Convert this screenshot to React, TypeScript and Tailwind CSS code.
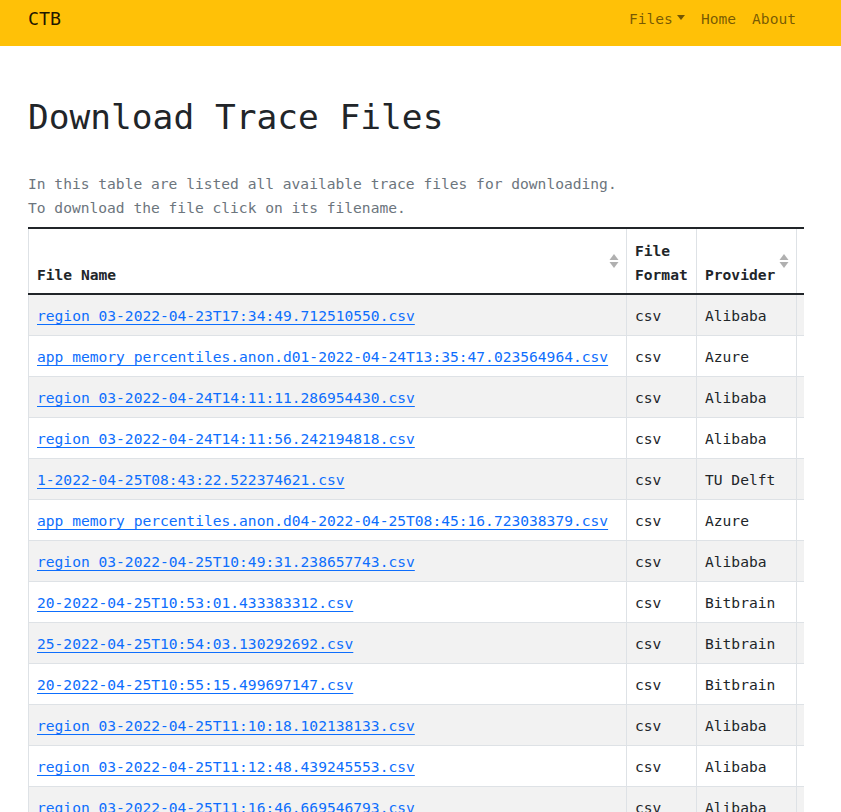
import { useState } from "react";

const MONO = "font-['DejaVu_Sans_Mono','Liberation_Mono',monospace]";

type TraceFile = {
  name: string;
  format: string;
  provider: string;
};

const TRACE_FILES: TraceFile[] = [
  { name: "region_03-2022-04-23T17:34:49.712510550.csv", format: "csv", provider: "Alibaba" },
  { name: "app_memory_percentiles.anon.d01-2022-04-24T13:35:47.023564964.csv", format: "csv", provider: "Azure" },
  { name: "region_03-2022-04-24T14:11:11.286954430.csv", format: "csv", provider: "Alibaba" },
  { name: "region_03-2022-04-24T14:11:56.242194818.csv", format: "csv", provider: "Alibaba" },
  { name: "1-2022-04-25T08:43:22.522374621.csv", format: "csv", provider: "TU Delft" },
  { name: "app_memory_percentiles.anon.d04-2022-04-25T08:45:16.723038379.csv", format: "csv", provider: "Azure" },
  { name: "region_03-2022-04-25T10:49:31.238657743.csv", format: "csv", provider: "Alibaba" },
  { name: "20-2022-04-25T10:53:01.433383312.csv", format: "csv", provider: "Bitbrain" },
  { name: "25-2022-04-25T10:54:03.130292692.csv", format: "csv", provider: "Bitbrain" },
  { name: "20-2022-04-25T10:55:15.499697147.csv", format: "csv", provider: "Bitbrain" },
  { name: "region_03-2022-04-25T11:10:18.102138133.csv", format: "csv", provider: "Alibaba" },
  { name: "region_03-2022-04-25T11:12:48.439245553.csv", format: "csv", provider: "Alibaba" },
  { name: "region_03-2022-04-25T11:16:46.669546793.csv", format: "csv", provider: "Alibaba" },
  { name: "region_03-2022-04-25T11:20:02.118430771.csv", format: "csv", provider: "Alibaba" },
];

const COLUMNS = [
  { key: "name", label: "File Name", sortable: true },
  { key: "format", label: "File Format", sortable: false },
  { key: "provider", label: "Provider", sortable: true },
  { key: "size", label: "Size", sortable: true },
];

function SortIcon() {
  return (
    <svg aria-hidden="true" className="h-[16px] w-[10px]" viewBox="0 0 10 16">
      <path d="M5 1 L9.5 7 L0.5 7 Z" fill="#b0b0b0" />
      <path d="M5 15 L9.5 9 L0.5 9 Z" fill="#b0b0b0" />
    </svg>
  );
}

function Navbar() {
  return (
    <nav className="h-[46px] bg-[#ffc107]">
      <div className="mx-[28px] flex h-full w-[776px] items-center justify-between pb-[8px]">
        <a className="text-[18.3px] leading-none text-black/90" href="#">
          CTB
        </a>
        <ul className="flex items-center text-[14.6px] text-black/55">
          <li className="flex items-center px-2">
            Files
            <span className="ml-[4px] mt-[-2px] h-0 w-0 border-x-[4px] border-t-[5px] border-x-transparent border-t-black/55" />
          </li>
          <li className="px-2">Home</li>
          <li className="px-2">About</li>
        </ul>
      </div>
    </nav>
  );
}

export default function App() {
  const [sortKey, setSortKey] = useState<string | null>(null);

  return (
    <div className={`${MONO} min-h-[812px] bg-white text-[#212529]`}>
      <Navbar />

      <main className="mx-[28px] w-[776px]">
        <h1 className="mt-[50px] text-[34.5px] leading-[42px]">
          Download Trace Files
        </h1>

        <p className="mt-[34px] text-[14.6px] leading-[24px] text-[#6c757d]">
          In this table are listed all available trace files for downloading.
          <br />
          To download the file click on its filename.
        </p>

        <div className="mt-[7px] w-[776px] overflow-hidden">
          <table className="w-[900px] table-fixed border-collapse text-[14.6px] leading-[24px]">
            <colgroup>
              <col className="w-[598px]" />
              <col className="w-[70px]" />
              <col className="w-[100px]" />
              <col className="w-[132px]" />
            </colgroup>
            <thead className="border-y-2 border-y-[#212529]">
              <tr>
                {COLUMNS.map((column) => (
                  <th
                    className="relative border-x border-x-[#dee2e6] px-2 pb-[6px] pt-[10px] text-left align-bottom font-bold"
                    key={column.key}
                    onClick={() => setSortKey(column.key)}
                  >
                    <span className={sortKey === column.key ? "underline" : undefined}>
                      {column.label}
                    </span>
                    {column.sortable ? (
                      <span className="absolute right-[7px] top-1/2 flex -translate-y-1/2">
                        <SortIcon />
                      </span>
                    ) : null}
                  </th>
                ))}
              </tr>
            </thead>
            <tbody>
              {TRACE_FILES.map((file, index) => (
                <tr
                  className={`border-b border-b-[#dee2e6] ${index % 2 === 0 ? "bg-[#f2f2f2]" : "bg-white"}`}
                  key={file.name}
                >
                  <td className="border-x border-x-[#dee2e6] px-2 pb-[7px] pt-[9px] whitespace-nowrap">
                    <a
                      className="text-[#0d6efd] underline underline-offset-[3px]"
                      href="#"
                    >
                      {file.name}
                    </a>
                  </td>
                  <td className="border-x border-x-[#dee2e6] px-2 pb-[7px] pt-[9px]">
                    {file.format}
                  </td>
                  <td className="border-x border-x-[#dee2e6] px-2 pb-[7px] pt-[9px] whitespace-nowrap">
                    {file.provider}
                  </td>
                  <td className="border-x border-x-[#dee2e6] px-2 pb-[7px] pt-[9px]">-</td>
                </tr>
              ))}
            </tbody>
          </table>
        </div>
      </main>
    </div>
  );
}
